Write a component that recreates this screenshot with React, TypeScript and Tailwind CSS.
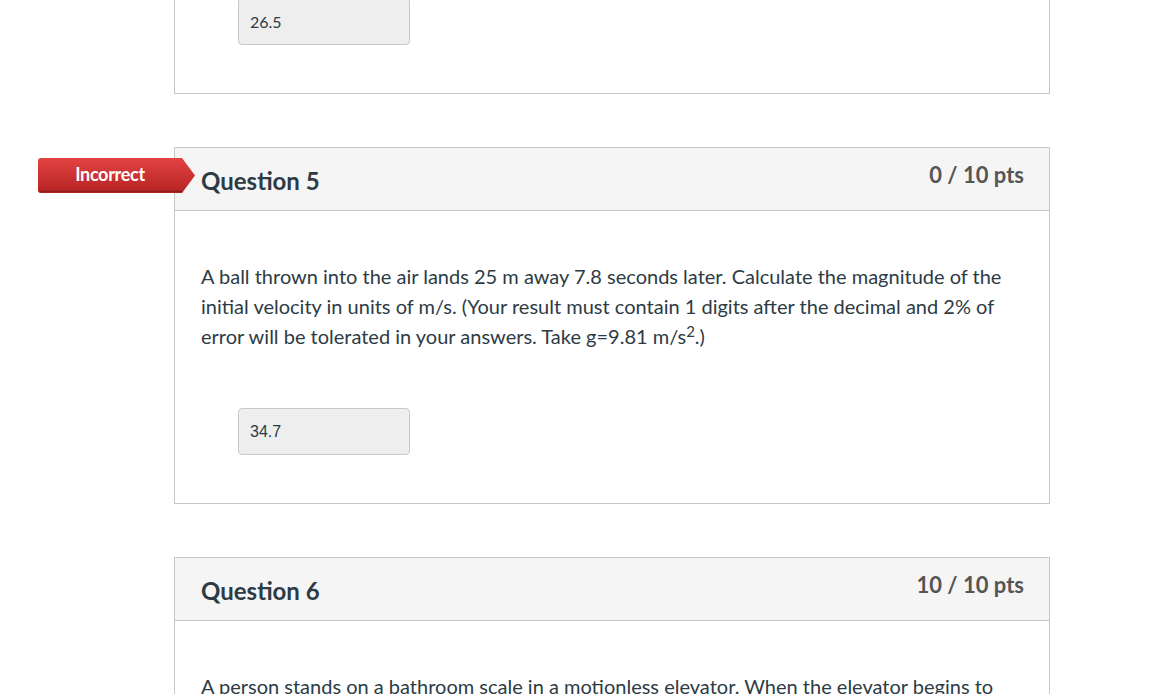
const answerBox =
  "w-[172px] h-[47px] rounded-[4px] border border-[#c8c8c8] bg-[#eeeeee] flex items-center px-[11px] text-[16px] text-[#2d3b45]";

function IncorrectTag() {
  return (
    <div className="absolute left-[-137px] top-[10px] w-[157px] h-[35px]">
      <svg width="157" height="35" viewBox="0 0 157 35" className="absolute inset-0">
        <defs>
          <linearGradient id="tagRed" x1="0" y1="0" x2="0" y2="1">
            <stop offset="0" stopColor="#e34242" />
            <stop offset="1" stopColor="#b52323" />
          </linearGradient>
        </defs>
        <path d="M3 0 H144 L157 17.5 L144 35 H3 Q0 35 0 32 V3 Q0 0 3 0 Z" fill="url(#tagRed)" />
        <path d="M1 33.5 H144.5" stroke="#8e1a1a" strokeWidth="1.5" />
      </svg>
      <span className="relative flex h-full w-[144px] items-center justify-center pb-[3px] text-[18px] font-bold text-white tracking-[-0.3px]">
        Incorrect
      </span>
    </div>
  );
}

function Header({ title, pts }: { title: string; pts: string }) {
  return (
    <div className="flex justify-between h-[63px] bg-[#f5f5f5] border-b border-[#c7c7c7] pl-[26px] pr-[25px]">
      <h2 className="pt-[15px] text-[24px] font-bold text-[#2d3b45]">{title}</h2>
      <div className="pt-[10px] text-[22px] font-bold text-[#555555]">{pts}</div>
    </div>
  );
}

export default function App() {
  return (
    <div className="min-h-screen bg-white overflow-hidden font-['Lato','Noto_Sans',sans-serif] text-[#2d3b45]">
      <div className="ml-[174px] w-[876px] -mt-[2px]">
        <section className="border-x border-b border-[#c7c7c7] pl-[63px] pb-[48px]">
          <div className={answerBox}>26.5</div>
        </section>

        <section className="relative mt-[53px] border border-[#c7c7c7]">
          <IncorrectTag />
          <Header title="Question 5" pts="0 / 10 pts" />
          <div className="pl-[26px] pr-[30px] pt-[50px] pb-[48px]">
            <p className="text-[20px] leading-[30px] text-[#2d3b45]">
              A ball thrown into the air lands 25 m away 7.8 seconds later. Calculate the magnitude of the
              initial velocity in units of m/s. (Your result must contain 1 digits after the decimal and 2% of
              error will be tolerated in your answers. Take g=9.81 m/s<sup className="text-[15px]">2</sup>.)
            </p>
            <div className="mt-[57px] ml-[37px]">
              <div className={answerBox + " font-['Liberation_Sans',sans-serif]"}>34.7</div>
            </div>
          </div>
        </section>

        <section className="relative mt-[53px] border border-[#c7c7c7]">
          <Header title="Question 6" pts="10 / 10 pts" />
          <div className="pl-[26px] pr-[30px] pt-[50px] pb-[48px]">
            <p className="text-[20px] leading-[30px] text-[#2d3b45]">
              A person stands on a bathroom scale in a motionless elevator. When the elevator begins to
              move, the scale briefly reads only 0.75 of the person's regular weight.
            </p>
          </div>
        </section>
      </div>
    </div>
  );
}
